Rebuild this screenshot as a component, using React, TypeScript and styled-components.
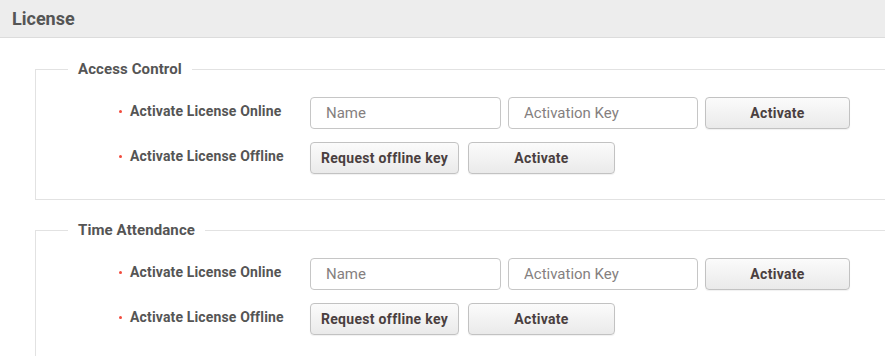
import React from "react";
import styled, { createGlobalStyle } from "styled-components";

const Global = createGlobalStyle`
  html, body { margin: 0; padding: 0; background: #fff; }
  body { font-family: Roboto, "Noto Sans", Arial, sans-serif; overflow: hidden; }
  * { box-sizing: border-box; }
`;

const Page = styled.div`
  width: 885px;
  height: 356px;
  overflow: hidden;
`;

const Header = styled.div`
  height: 38px;
  background: #ededed;
  border-bottom: 1px solid #dcdcdc;
  display: flex;
  align-items: center;
  padding-left: 12px;
  font-size: 18px;
  font-weight: 700;
  color: #555;
`;

const Body = styled.div`
  padding: 21px 0 0 35px;
  display: flex;
  flex-direction: column;
  gap: 20px;
`;

const Fieldset = styled.fieldset`
  margin: 0;
  width: 900px;
  border: 1px solid #e2e2e2;
  border-right: none;
  padding: 18px 0 25px 0;
  min-width: 0;
`;

const Legend = styled.legend`
  margin-left: 32px;
  padding: 0 10px;
  font-size: 15px;
  line-height: 20px;
  font-weight: 700;
  letter-spacing: 0.1px;
  color: #555;
`;

const Rows = styled.div`
  display: flex;
  flex-direction: column;
  gap: 13px;
`;

const Row = styled.div`
  display: flex;
  align-items: center;
  padding-left: 83px;
`;

const Label = styled.div`
  width: 191px;
  display: flex;
  align-items: center;
  gap: 8px;
  font-size: 14px;
  font-weight: 700;
  letter-spacing: 0.15px;
  color: #555;
  margin-top: -4px;
`;

const Dot = styled.span`
  width: 3px;
  height: 3px;
  border-radius: 50%;
  background: #f24a3c;
`;

const Controls = styled.div<{ $gap: number }>`
  display: flex;
  gap: ${(p) => p.$gap}px;
`;

const Input = styled.input<{ $w: number }>`
  width: ${(p) => p.$w}px;
  height: 32px;
  border: 1px solid #c6c6c6;
  border-radius: 4px;
  padding: 0 15px;
  font-family: Roboto, "Noto Sans", Arial, sans-serif;
  font-size: 15px;
  color: #555;
  background: #fff;
  outline: none;
  &::placeholder { color: #857f7f; }
`;

const Button = styled.button<{ $w: number }>`
  width: ${(p) => p.$w}px;
  height: 32px;
  border: 1px solid #c2c2c2;
  border-radius: 4px;
  background: linear-gradient(#fbfbfb, #eaeaea);
  box-shadow: 0 1px 1px rgba(0, 0, 0, 0.06);
  font-family: Roboto, "Noto Sans", Arial, sans-serif;
  font-size: 14px;
  font-weight: 700;
  letter-spacing: 0.3px;
  color: #4a3f40;
  padding: 0;
  cursor: pointer;
`;

const Section = ({ title }: { title: string }) => (
  <Fieldset>
    <Legend>{title}</Legend>
    <Rows>
      <Row>
        <Label>
          <Dot />
          Activate License Online
        </Label>
        <Controls $gap={7}>
          <Input $w={191} placeholder="Name" />
          <Input $w={190} placeholder="Activation Key" />
          <Button $w={145}>Activate</Button>
        </Controls>
      </Row>
      <Row>
        <Label>
          <Dot />
          Activate License Offline
        </Label>
        <Controls $gap={9}>
          <Button $w={149}>Request offline key</Button>
          <Button $w={147}>Activate</Button>
        </Controls>
      </Row>
    </Rows>
  </Fieldset>
);

export default function App() {
  return (
    <Page>
      <Global />
      <Header>License</Header>
      <Body>
        <Section title="Access Control" />
        <Section title="Time Attendance" />
      </Body>
    </Page>
  );
}
